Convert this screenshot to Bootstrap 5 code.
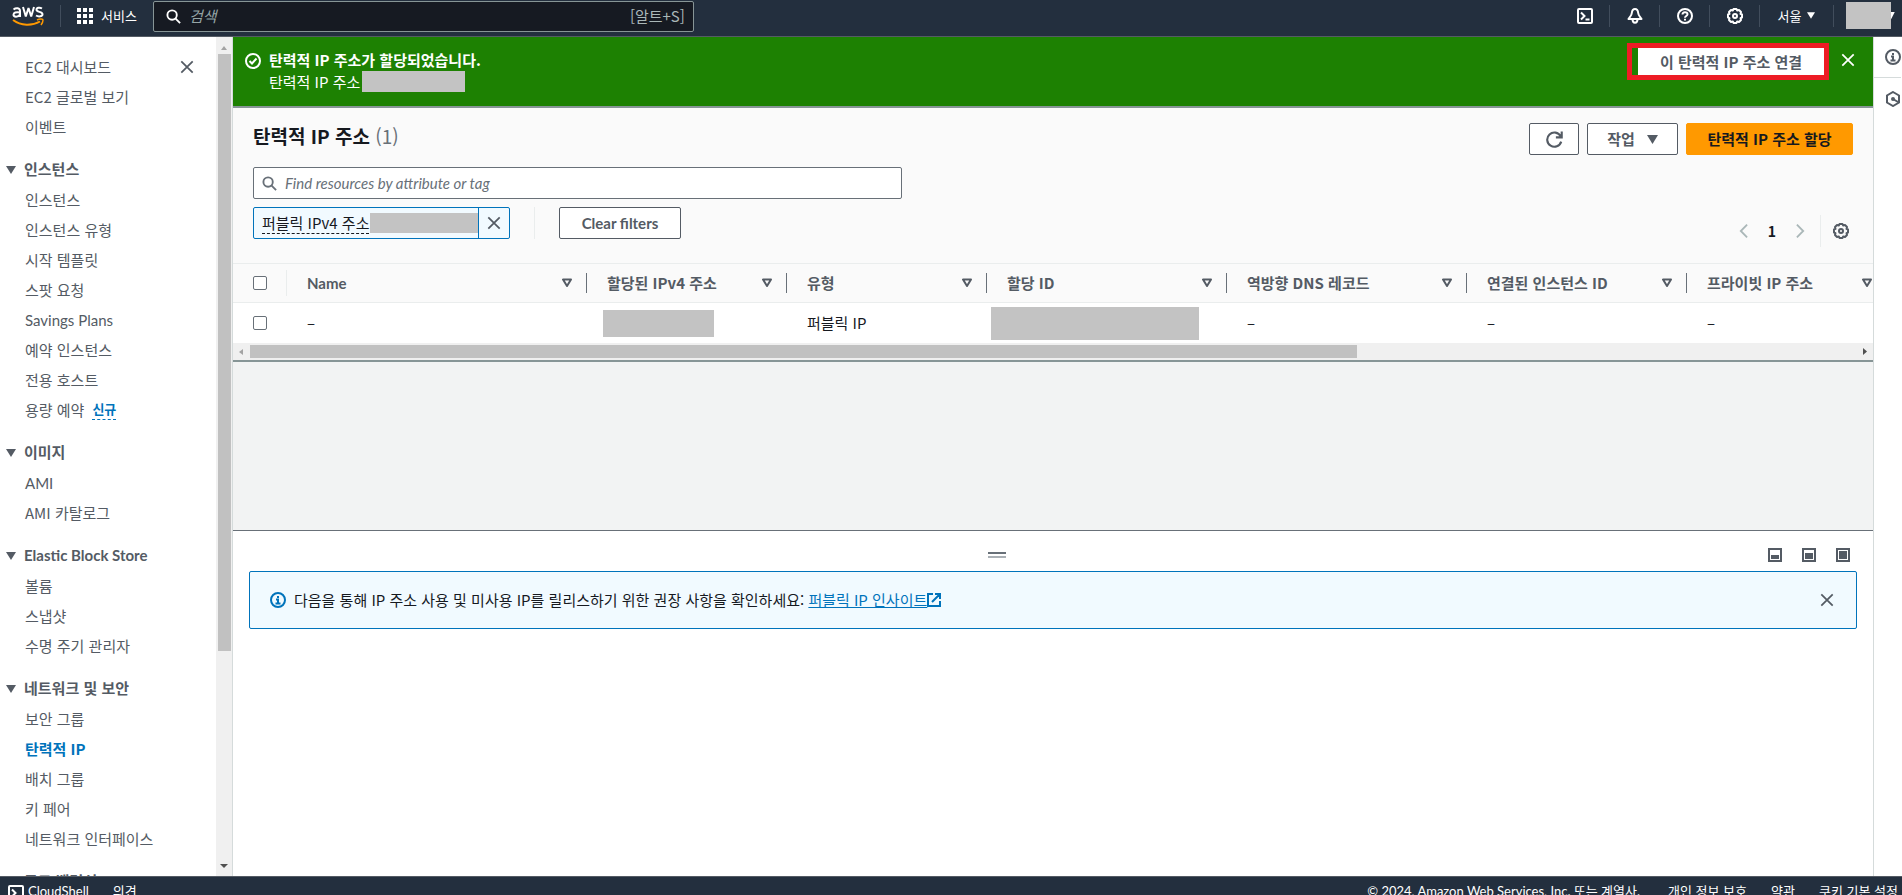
<!DOCTYPE html>
<html lang="ko">
<head>
<meta charset="utf-8">
<meta name="viewport" content="width=device-width, initial-scale=1">
<title>탄력적 IP 주소 | EC2</title>
<link rel="stylesheet" href="https://cdn.jsdelivr.net/npm/bootstrap@5.3.0/dist/css/bootstrap.min.css">
<style>
  :root { --ink:#16191f; --slate:#545b64; --mute:#687078; --blue:#0073bb; --navy:#232f3e; --mask:#c3c3c3; --rule:#eaeded; }
  body { font-family:"Noto Sans CJK KR", sans-serif; font-size:15px; line-height:22px; color:var(--ink); background:#fff; }
  .latin { font-family:Lato, "Noto Sans CJK KR", sans-serif; }
  button { color:inherit; }
  svg { display:block; flex:none; }
  .ico { fill:none; stroke:currentColor; stroke-width:2; }
  .plain { background:none; border:0; padding:0; }
  .masked { background:var(--mask); flex:none; }
  .workspace { min-height:0; }
  .workspace main { min-width:0; }

  .topbar { height:37px; background:var(--navy); border-bottom:1px solid #545b64; color:#fff; font-size:13px; padding-bottom:5px; }
  .topbar .vr-line { width:1px; height:22px; background:#414d5c; }
  .finder { width:541px; height:31px; margin-top:1px; background:#161a22; border:1px solid #879596; border-radius:2px; color:#aab7b8; font-size:15px; }
  .finder input { background:none; border:0; outline:0; color:#fff; font-style:italic; padding:0; min-width:0; }
  .finder input::placeholder { color:#95a5a6; }
  .top-slot { width:50px; border-left:1px solid #414d5c; height:22px; }
  .top-slot.region { width:74px; gap:6px; }
  .top-slot.user { width:69px; }
  .account { width:45px; height:27px; }

  .sidenav { width:216px; color:var(--slate); overflow:hidden; padding-top:19px; }
  .sidenav ul { margin:0; padding:0 0 0 25px; list-style:none; }
  .sidenav li { height:30px; }
  .sidenav li a, .tri-head { color:var(--slate); text-decoration:none; }
  .sidenav li a.current { color:var(--blue); font-weight:700; }
  .sidenav .shut { margin-right:22px; }
  .sidenav .new-tag { color:var(--blue); font-size:13px; font-weight:700; line-height:20px; border-bottom:1px dashed var(--blue); }
  .tri-head { height:30px; margin-top:12px; margin-bottom:1px; padding-left:6px; font-weight:700; }

  .vscroll { width:17px; background:#f0f0f0; padding:5px 2px 4px; border-right:1px solid #d5dbdb; }
  .vscroll .thumb { width:13px; height:597px; background:#c1c1c1; margin-top:4px; }
  .hscroll { height:17px; background:#f0f0f0; padding:0 6px; }
  .hscroll .thumb { width:68%; height:13px; background:#c1c1c1; margin-left:7px; }

  .flash { background:#1d8102; color:#fff; height:71px; border-bottom:2px solid #879596; padding:12px 18px 0 12px; }
  .flash .addr { gap:2px; }
  .callout { border:5px solid #ed1c24; padding:0 0 0 6px; margin-top:-6px; height:37px; }
  .flash-btn { width:186px; height:27px; border-radius:0; color:var(--slate); background:#fff; border:0; font-size:15px; font-weight:700; padding:0; line-height:24px; }
  .panel-head { background:#fafafa; padding:15px 20px 24px; }
  .panel-head h1 { font-size:19px; line-height:26px; font-weight:700; margin:0; }
  .panel-head h1 span { color:var(--mute); }
  .btn-aws { height:32px; padding:0; border:1px solid var(--slate); border-radius:2px; background:#fff; color:var(--slate); font-size:15px; font-weight:700; line-height:28px; }
  .btn-aws.main { background:#ff9900; border-color:#ff9900; color:var(--ink); width:167px; }
  .btn-aws.reload { width:50px; }
  .btn-aws.actions { width:91px; gap:12px; }
  .btn-aws.clear { width:122px; }
  .query { width:649px; height:32px; margin-top:12px; border:1px solid var(--mute); border-radius:2px; background:#fff; color:var(--mute); }
  .query input { border:0; outline:0; font-style:italic; font-size:15px; padding:0; }
  .query input::placeholder { color:var(--mute); }
  .token { height:32px; width:257px; border:1px solid var(--blue); border-radius:2px; background:#f1faff; }
  .token .term { border-bottom:1px dashed var(--ink); line-height:20px; white-space:nowrap; }
  .token button { border-left:1px solid var(--blue); width:31px; color:var(--slate); }
  .split { width:1px; height:32px; background:var(--rule); }
  .pager { height:32px; margin:8px 4px -8px 0; color:#aab7b8; }
  .pager .pages { gap:20px; margin-right:15px; }
  .pager b { color:var(--ink); font-size:14px; }
  .pager .prefs { color:var(--slate); margin-left:12px; }

  .grid-table { table-layout:fixed; width:1654px; border-collapse:separate; border-spacing:0; }
  .grid-table th { height:40px; background:#fafafa; border-top:1px solid var(--rule); border-bottom:1px solid var(--rule); padding:0 0 0 20px; color:var(--slate); font-weight:700; white-space:nowrap; }
  .grid-table td { height:40px; background:#fff; padding:0 0 0 20px; }
  .grid-table .bar { width:1px; height:20px; background:var(--mute); margin-left:14px; }
  .grid-table .bar.faint { background:var(--rule); height:26px; }
  .tick { appearance:none; display:block; width:14px; height:14px; margin:0; border:1px solid var(--mute); border-radius:2px; background:#fff; }
  .work { background:#f2f3f3; height:170px; border-top:2px solid #879596; }

  .lower { border-top:1px solid #687078; padding:10px 16px 0; }
  .pane-bar { height:28px; margin-bottom:2px; }
  .pane-sizes { width:112px; gap:20px; padding-right:7px; color:var(--slate); }
  .notice { border:1px solid var(--blue); border-radius:2px; background:#f1faff; height:58px; padding:0 22px 0 20px; }
  .notice a { color:var(--blue); }
  .grip { width:18px; height:6px; border-top:2px solid #687078; border-bottom:2px solid #aab0b5; }
  .rail { width:29px; border-left:1px solid #d5dbdb; color:var(--slate); overflow:hidden; }
  .rail button { height:41px; padding-left:11px; }
  .rail button:first-child { border-bottom:1px solid #d5dbdb; }
  .foot { height:19px; background:var(--navy); border-top:1px solid #545b64; color:#fff; font-size:13px; line-height:28px; overflow:hidden; }
  .foot a { color:#fff; text-decoration:none; }
</style>
</head>
<body class="d-flex flex-column vh-100 overflow-hidden">
<svg width="0" height="0" class="position-absolute" aria-hidden="true">
  <defs>
    <symbol id="i-x" viewBox="0 0 16 16"><path d="M1.500 1.500l13 13M14.500 1.500l-13 13"/></symbol>
    <symbol id="i-search" viewBox="0 0 16 16"><circle cx="6.500" cy="6.500" r="5"/><path d="M10 10l5 5"/></symbol>
    <symbol id="i-down" viewBox="0 0 10 8"><path d="M0 0h10L5 8z" fill="currentColor" stroke="none"/></symbol>
    <symbol id="i-sort" viewBox="0 0 10 10"><path d="M1 1.500h8L5 8z" stroke-linejoin="round"/></symbol>
    <symbol id="i-info" viewBox="0 0 16 16"><circle cx="8" cy="8" r="7"/><path d="M6 7.500h2v4M5.500 11.500h5M8 4v2"/></symbol>
    <symbol id="i-gear" viewBox="0 0 16 16"><path d="M6.500 1h3l.6 1.500 1.900-.5 2 2-.5 1.900 1.500.6v3l-1.500.6.5 1.900-2 2-1.900-.5-.6 1.500h-3l-.6-1.500-1.900.5-2-2 .5-1.900L1 9.500v-3l1.500-.6L2 4l2-2 1.900.5z" stroke-linejoin="round"/><circle cx="8" cy="8" r="2"/></symbol>
    <symbol id="i-shell" viewBox="0 0 16 16"><rect x="1" y="1" width="14" height="14" rx="1"/><path d="M4 4.500L7.500 8 4 11.500M8.500 11.500h4"/></symbol>
    <symbol id="i-left" viewBox="0 0 10 16"><path d="M9 1L2 8l7 7"/></symbol>
    <symbol id="i-right" viewBox="0 0 10 16"><path d="M1 1l7 7-7 7"/></symbol>
  </defs>
</svg>

<header class="topbar d-flex align-items-center flex-shrink-0">
  <a href="#" class="ms-2 ps-1" aria-label="aws"><svg width="32" height="22" viewBox="0 0 32 22"><g fill="none" stroke="#fff" stroke-width="2"><path d="M1.500 4.500C4 2.500 8 2.800 8 6v6M8 7.500C4 6.800 1.500 7.500 1.500 9.800S6 12.500 8 9.500"/><path d="M11 2l2.800 9.500L16.500 3l2.700 8.500L22 2" stroke-linejoin="bevel"/><path d="M30 3.500c-2-1.200-5.500-1-5.500 1.200 0 2.800 6 1.500 6 4.500 0 2.500-4 2.800-6.500 1.300"/></g><path d="M1 15c8 6 19 6 27 1.500" fill="none" stroke="#f90" stroke-width="2"/><path d="M25 15c3-1.500 6-1 6 0s-.5 3-2 5" fill="none" stroke="#f90" stroke-width="1.500"/></svg></a>
  <span class="vr-line ms-3"></span>
  <button class="plain d-flex align-items-center gap-2 ms-3" type="button">
    <svg width="16" height="16" viewBox="0 0 16 16" fill="#fff"><path d="M0 0h4v4H0zM6 0h4v4H6zM12 0h4v4h-4zM0 6h4v4H0zM6 6h4v4H6zM12 6h4v4h-4zM0 12h4v4H0zM6 12h4v4H6zM12 12h4v4h-4z"/></svg>
    <span>서비스</span>
  </button>
  <label class="finder d-flex align-items-center ms-3 px-2">
    <svg class="ico ms-1 text-white" width="15" height="15"><use href="#i-search"/></svg>
    <input class="flex-grow-1 ms-2" type="search" placeholder="검색" aria-label="검색">
    <span>[알트+S]</span>
  </label>
  <nav class="d-flex align-items-center ms-auto">
    <button class="plain px-3" type="button" aria-label="CloudShell"><svg class="ico" width="16" height="16"><use href="#i-shell"/></svg></button>
    <button class="plain top-slot d-flex align-items-center justify-content-center" type="button" aria-label="알림"><svg class="ico" width="16" height="16" viewBox="0 0 16 16"><path d="M8 1c-2.500 0-3 2-3.200 4C4.600 8 2.500 9 1.500 11h13c-1-2-3.100-3-3.300-6C11 3 10.500 1 8 1zM5.500 11c0 5 5 5 5 0" stroke-linejoin="round"/></svg></button>
    <button class="plain top-slot d-flex align-items-center justify-content-center" type="button" aria-label="도움말"><svg class="ico" width="16" height="16" viewBox="0 0 16 16"><circle cx="8" cy="8" r="7"/><path d="M5.500 6.500C5.500 3.500 10.500 3.500 10.500 6.200 10.500 8 8 8 8 9.800M8 10.800v1.800"/></svg></button>
    <button class="plain top-slot d-flex align-items-center justify-content-center" type="button" aria-label="설정"><svg class="ico" width="16" height="16"><use href="#i-gear"/></svg></button>
    <button class="plain top-slot region d-flex align-items-center justify-content-center" type="button"><span>서울</span><svg width="8" height="7"><use href="#i-down"/></svg></button>
    <button class="plain top-slot user d-flex align-items-center ps-2" type="button" aria-label="계정"><span class="masked account ms-1"></span><svg width="4" height="7" viewBox="4 0 4 8"><path d="M0 0h8L4 8z" fill="#fff"/></svg></button>
  </nav>
</header>

<div class="workspace d-flex flex-grow-1">
  <aside class="sidenav flex-shrink-0">
    <div class="d-flex justify-content-between">
      <ul>
        <li><a href="#">EC2 대시보드</a></li>
        <li><a href="#">EC2 글로벌 보기</a></li>
        <li><a href="#">이벤트</a></li>
      </ul>
      <button class="plain shut align-self-start pt-1" type="button" aria-label="닫기"><svg class="ico" width="14" height="14"><use href="#i-x"/></svg></button>
    </div>
    <div class="tri-head d-flex gap-2"><svg class="mt-2" width="10" height="8"><use href="#i-down"/></svg><span>인스턴스</span></div>
    <ul>
      <li><a href="#">인스턴스</a></li><li><a href="#">인스턴스 유형</a></li><li><a href="#">시작 템플릿</a></li><li><a href="#">스팟 요청</a></li>
      <li><a href="#" class="latin">Savings Plans</a></li><li><a href="#">예약 인스턴스</a></li><li><a href="#">전용 호스트</a></li>
      <li class="d-flex gap-2 align-items-start"><a href="#">용량 예약</a><span class="new-tag">신규</span></li>
    </ul>
    <div class="tri-head d-flex gap-2"><svg class="mt-2" width="10" height="8"><use href="#i-down"/></svg><span>이미지</span></div>
    <ul><li><a href="#" class="latin">AMI</a></li><li><a href="#">AMI 카탈로그</a></li></ul>
    <div class="tri-head d-flex gap-2"><svg class="mt-2" width="10" height="8"><use href="#i-down"/></svg><span class="latin">Elastic Block Store</span></div>
    <ul><li><a href="#">볼륨</a></li><li><a href="#">스냅샷</a></li><li><a href="#">수명 주기 관리자</a></li></ul>
    <div class="tri-head d-flex gap-2"><svg class="mt-2" width="10" height="8"><use href="#i-down"/></svg><span>네트워크 및 보안</span></div>
    <ul><li><a href="#">보안 그룹</a></li><li><a href="#" class="current">탄력적 IP</a></li><li><a href="#">배치 그룹</a></li><li><a href="#">키 페어</a></li><li><a href="#">네트워크 인터페이스</a></li></ul>
    <div class="tri-head d-flex gap-2"><svg class="mt-2" width="10" height="8"><use href="#i-down"/></svg><span>로드 밸런싱</span></div>
  </aside>
  <div class="vscroll d-flex flex-column align-items-center flex-shrink-0">
    <svg width="6" height="4" class="mt-1" viewBox="0 0 6 4"><path d="M0 4l3-4 3 4z" fill="#a3a3a3"/></svg>
    <div class="thumb"></div>
    <svg width="8" height="4" class="mt-auto mb-1" viewBox="0 0 8 4"><path d="M0 0h8L4 4z" fill="#505050"/></svg>
  </div>

  <main class="flex-grow-1">
    <div class="flash d-flex" role="status">
      <svg class="ico me-2 mt-1" width="16" height="16" viewBox="0 0 16 16"><circle cx="8" cy="8" r="7"/><path d="M4.500 8l2.500 2.500 4.500-5"/></svg>
      <div>
        <div class="fw-bold">탄력적 IP 주소가 할당되었습니다.</div>
        <div class="addr d-flex"><span>탄력적 IP 주소</span><span class="masked" style="width:103px;height:21px"></span></div>
      </div>
      <div class="callout ms-auto"><button class="btn flash-btn" type="button">이 탄력적 IP 주소 연결</button></div>
      <button class="plain align-self-start ms-2 mt-1 ps-1" type="button" aria-label="닫기"><svg class="ico" width="14" height="14"><use href="#i-x"/></svg></button>
    </div>

    <section class="panel-head">
      <div class="d-flex gap-2">
        <h1>탄력적 IP 주소 <span class="fw-normal">(1)</span></h1>
        <button class="btn btn-aws reload ms-auto d-flex align-items-center justify-content-center" type="button" aria-label="새로 고침"><svg class="ico" width="17" height="17" viewBox="0 0 16 16"><path d="M14.300 10A6.700 6.700 0 1 1 13.800 5M14.800 0.500v5.500h-5.500"/></svg></button>
        <button class="btn btn-aws actions d-flex align-items-center justify-content-center" type="button"><span>작업</span><svg width="11" height="9"><use href="#i-down"/></svg></button>
        <button class="btn btn-aws main" type="button">탄력적 IP 주소 할당</button>
      </div>
      <label class="query d-flex align-items-center px-2"><svg class="ico" width="15" height="15"><use href="#i-search"/></svg><input class="latin flex-grow-1 ms-2" type="text" placeholder="Find resources by attribute or tag" aria-label="Find resources by attribute or tag"></label>
      <div class="d-flex mt-2">
        <div class="token d-flex align-items-center">
          <span class="term ms-2">퍼블릭 IPv4 주소</span><span class="masked ms-auto" style="width:108px;height:20px"></span>
          <button class="plain h-100 d-flex align-items-center justify-content-center" type="button" aria-label="필터 제거"><svg class="ico" width="14" height="14"><use href="#i-x"/></svg></button>
        </div>
        <span class="split mx-4"></span>
        <button class="btn btn-aws clear latin" type="button">Clear filters</button>
        <div class="pager d-flex align-items-center ms-auto">
          <div class="pages d-flex align-items-center">
            <button class="plain" type="button" aria-label="이전 페이지"><svg class="ico" width="9" height="16"><use href="#i-left"/></svg></button><b>1</b><button class="plain" type="button" aria-label="다음 페이지"><svg class="ico" width="9" height="16"><use href="#i-right"/></svg></button>
          </div>
          <span class="split"></span>
          <button class="plain prefs" type="button" aria-label="기본 설정"><svg class="ico" width="16" height="16"><use href="#i-gear"/></svg></button>
        </div>
      </div>
    </section>

    <div class="overflow-hidden">
      <table class="grid-table">
        <colgroup><col style="width:54px"><col style="width:300px"><col style="width:200px"><col style="width:200px"><col style="width:240px"><col style="width:240px"><col style="width:220px"><col style="width:200px"></colgroup>
        <thead><tr>
          <th scope="col"><div class="d-flex align-items-center justify-content-between"><input class="tick" type="checkbox" aria-label="모두 선택"><span class="bar faint"></span></div></th>
          <th scope="col"><div class="d-flex align-items-center"><span class="latin me-auto">Name</span><svg class="ico" width="10" height="10"><use href="#i-sort"/></svg><span class="bar"></span></div></th>
          <th scope="col"><div class="d-flex align-items-center"><span class="me-auto">할당된 IPv4 주소</span><svg class="ico" width="10" height="10"><use href="#i-sort"/></svg><span class="bar"></span></div></th>
          <th scope="col"><div class="d-flex align-items-center"><span class="me-auto">유형</span><svg class="ico" width="10" height="10"><use href="#i-sort"/></svg><span class="bar"></span></div></th>
          <th scope="col"><div class="d-flex align-items-center"><span class="me-auto">할당 ID</span><svg class="ico" width="10" height="10"><use href="#i-sort"/></svg><span class="bar"></span></div></th>
          <th scope="col"><div class="d-flex align-items-center"><span class="me-auto">역방향 DNS 레코드</span><svg class="ico" width="10" height="10"><use href="#i-sort"/></svg><span class="bar"></span></div></th>
          <th scope="col"><div class="d-flex align-items-center"><span class="me-auto">연결된 인스턴스 ID</span><svg class="ico" width="10" height="10"><use href="#i-sort"/></svg><span class="bar"></span></div></th>
          <th scope="col"><div class="d-flex align-items-center"><span class="me-auto">프라이빗 IP 주소</span><svg class="ico" width="10" height="10"><use href="#i-sort"/></svg><span class="bar"></span></div></th>
        </tr></thead>
        <tbody><tr>
          <td><input class="tick" type="checkbox" aria-label="행 선택"></td>
          <td>–</td>
          <td class="ps-3"><div class="masked" style="width:111px;height:27px"></div></td>
          <td>퍼블릭 IP</td>
          <td class="ps-1"><div class="masked" style="width:208px;height:33px"></div></td>
          <td>–</td><td>–</td><td>–</td>
        </tr></tbody>
      </table>
    </div>
    <div class="hscroll d-flex align-items-center">
      <svg width="4" height="6" viewBox="0 0 4 6"><path d="M4 0v6L0 3z" fill="#a3a3a3"/></svg><div class="thumb"></div><svg class="ms-auto" width="4" height="7" viewBox="0 0 4 7"><path d="M0 0v7l4-3.500z" fill="#505050"/></svg>
    </div>
    <div class="work"></div>
    <section class="lower">
      <div class="pane-bar d-flex align-items-center">
        <div class="flex-grow-1 d-flex justify-content-center"><div class="grip"></div></div>
        <div class="pane-sizes d-flex justify-content-end">
          <button class="plain" type="button" aria-label="작게"><svg class="ico" width="14" height="14" viewBox="0 0 14 14"><rect x="1" y="1" width="12" height="12"/><path d="M3 7h8v4H3z" fill="currentColor" stroke="none"/></svg></button>
          <button class="plain" type="button" aria-label="중간"><svg class="ico" width="14" height="14" viewBox="0 0 14 14"><rect x="1" y="1" width="12" height="12"/><path d="M3 5h8v6H3z" fill="currentColor" stroke="none"/></svg></button>
          <button class="plain" type="button" aria-label="크게"><svg class="ico" width="14" height="14" viewBox="0 0 14 14"><rect x="1" y="1" width="12" height="12"/><path d="M3 3h8v8H3z" fill="currentColor" stroke="none"/></svg></button>
        </div>
      </div>
      <div class="notice d-flex align-items-center" role="alert">
        <svg class="ico me-2" style="color:var(--blue)" width="16" height="16"><use href="#i-info"/></svg>
        <span>다음을 통해 IP 주소 사용 및 미사용 IP를 릴리스하기 위한 권장 사항을 확인하세요:&nbsp;</span><a class="d-flex align-items-center" href="#">퍼블릭 IP 인사이트<svg class="ico" width="14" height="14" viewBox="0 0 14 14"><path d="M6 1H1v12h12V8M8 1h5v5M13 1L5 9"/></svg></a>
        <button class="plain ms-auto" style="color:var(--slate)" type="button" aria-label="닫기"><svg class="ico" width="14" height="14"><use href="#i-x"/></svg></button>
      </div>
    </section>
  </main>

  <aside class="rail flex-shrink-0">
    <button class="plain d-block" type="button" aria-label="정보"><svg class="ico" width="16" height="16"><use href="#i-info"/></svg></button>
    <button class="plain d-block" type="button" aria-label="자습서"><svg class="ico" width="16" height="16" viewBox="0 0 16 16"><path d="M8 1l6 3.500v7L8 15l-6-3.500v-7zM8 8l5 3"/><circle cx="8" cy="8" r="1"/></svg></button>
  </aside>
</div>

<footer class="foot d-flex flex-shrink-0 ps-2 pe-1">
  <a href="#" class="d-flex gap-1"><svg class="ico mt-2" width="16" height="16"><use href="#i-shell"/></svg><span class="latin">CloudShell</span></a>
  <a href="#" class="ms-4">의견</a>
  <span class="latin ms-auto">© 2024, Amazon Web Services, Inc. 또는 계열사.</span>
  <a href="#" class="ms-4 ps-1">개인 정보 보호</a>
  <a href="#" class="ms-4">약관</a>
  <a href="#" class="ms-4">쿠키 기본 설정</a>
</footer>
<script src="https://cdn.jsdelivr.net/npm/bootstrap@5.3.0/dist/js/bootstrap.bundle.min.js"></script>
</body>
</html>
